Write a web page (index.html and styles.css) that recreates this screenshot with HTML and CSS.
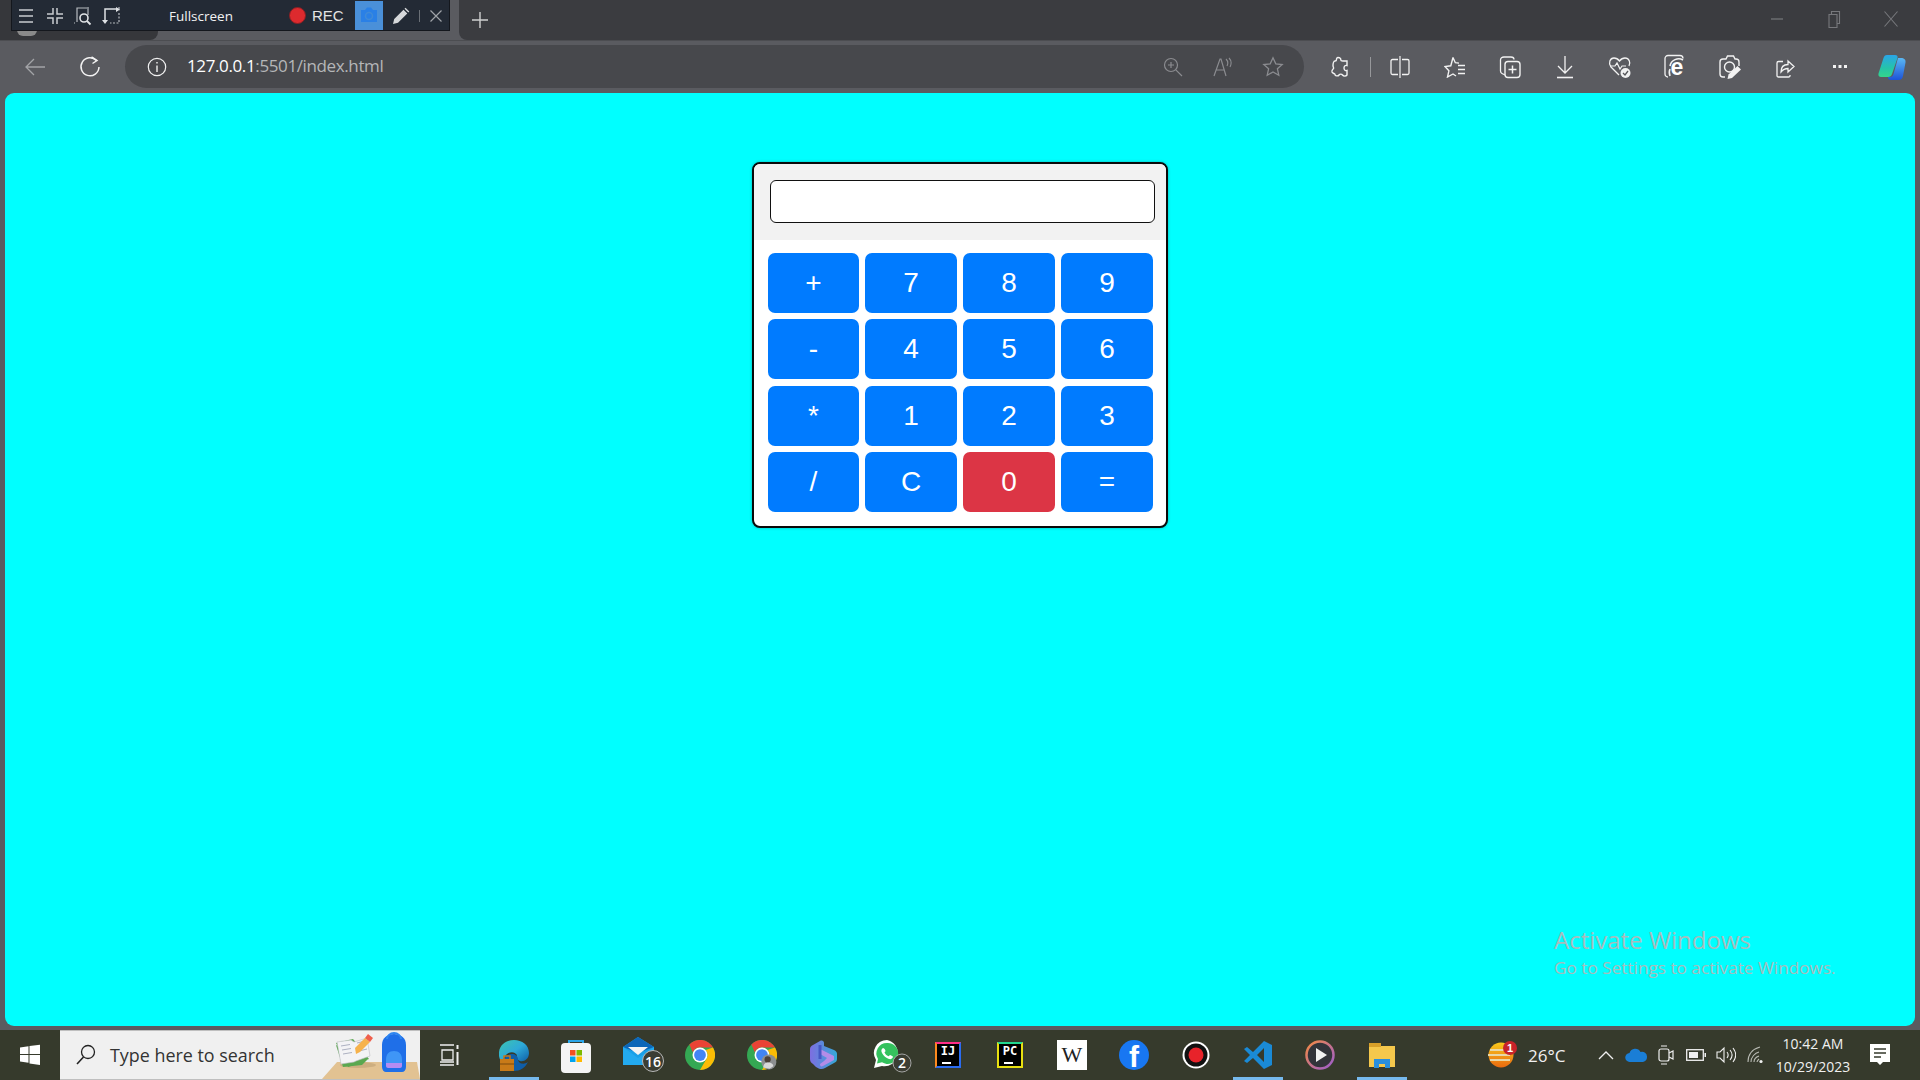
FILE: index.html
```html
<!DOCTYPE html>
<html lang="en">
<head>
<meta charset="utf-8">
<title>Calculator</title>
<link rel="stylesheet" href="styles.css">
</head>
<body>
<div class="win">
  <header class="tabstrip">
    <div class="tab-left"><span class="favicon"></span></div>
    <div class="tab-active"></div>
    <div class="tab-right">
      <svg class="newtab" width="18" height="18" viewBox="0 0 18 18"><path d="M9 1v16M1 9h16" stroke="#d0d0d0" stroke-width="1.4"/></svg>
      <div class="winctl">
        <span class="winbtn"><svg width="14" height="14" viewBox="0 0 14 14"><path d="M1 7h12" stroke="#77787c" stroke-width="1.2"/></svg></span>
        <span class="winbtn"><svg width="14" height="20" viewBox="0 0 14 20"><path d="M2 5.5h8v13H2zM4.500 5.500V2.500h8v12h-2.500" fill="none" stroke="#77787c" stroke-width="1.1"/></svg></span>
        <span class="winbtn"><svg width="16" height="18" viewBox="0 0 16 18"><path d="M1.500 1.500l13 15M14.500 1.500l-13 15" stroke="#77787c" stroke-width="1.100"/></svg></span>
      </div>
    </div>
    <div class="recbar">
      <span class="rec-ico"><svg width="18" height="18" viewBox="0 0 18 18"><path d="M2 3h14M2 9h14M2 15h14" stroke="#c9ccd0" stroke-width="1.500"/></svg></span>
      <span class="rec-ico"><svg width="18" height="18" viewBox="0 0 18 18"><path d="M7 1v6H1M11 1v6h6M7 17v-6H1M11 17v-6h6" fill="none" stroke="#c9ccd0" stroke-width="1.500"/></svg></span>
      <span class="rec-ico"><svg width="20" height="20" viewBox="0 0 20 20"><path d="M14 2H4v14M1 17h1M15 1v8" fill="none" stroke="#b7bbc0" stroke-width="1.200"/><circle cx="11" cy="12" r="4" fill="none" stroke="#dfe2e5" stroke-width="1.600"/><path d="M14 15l3.500 3.500" stroke="#dfe2e5" stroke-width="1.800"/></svg></span>
      <span class="rec-ico"><svg width="20" height="20" viewBox="0 0 20 20"><path d="M3 15V3h13" fill="none" stroke="#dfe2e5" stroke-width="1.500"/><path d="M17 1v3h1M17 7v10H8" fill="none" stroke="#b7bbc0" stroke-width="1.200" stroke-dasharray="2 1.500"/><path d="M0 14l3 4 3-4zM14 1l4 2.500-4 2.500z" fill="#dfe2e5"/></svg></span>
      <span class="rec-title">Fullscreen</span>
      <span class="rec-dot"></span>
      <span class="rec-label">REC</span>
      <span class="rec-cam"><svg width="20" height="18" viewBox="0 0 20 18"><path d="M2 4h4l2-2.500h4L14 4h4v12H2z" fill="#2a80e6"/><circle cx="10" cy="10" r="3.500" fill="none" stroke="#3f8ad8" stroke-width="1.500"/></svg></span>
      <span class="rec-pen"><svg width="18" height="18" viewBox="0 0 18 18"><path d="M1 17l1.200-5L11.500 2.700l3.800 3.800L6 15.800zM12.500 1.700l1-1 3.800 3.800-1 1z" fill="#d6d8da"/></svg></span>
      <span class="rec-sep"></span>
      <span class="rec-x"><svg width="14" height="14" viewBox="0 0 14 14"><path d="M1.500 1.500l11 11M12.500 1.500l-11 11" stroke="#9fa3a8" stroke-width="1.200"/></svg></span>
    </div>
  </header>

  <nav class="toolbar">
    <span class="tool"><svg width="22" height="22" viewBox="0 0 22 22"><path d="M21 11H2M10 3l-8 8 8 8" fill="none" stroke="#a3a4a7" stroke-width="1.300"/></svg></span>
    <span class="tool"><svg width="22" height="22" viewBox="0 0 22 22"><path d="M17.500 4.500A9 9 0 1 0 20 11" fill="none" stroke="#f2f2f2" stroke-width="1.500"/><path d="M12.500 1l5.500 3.500-4.500 3" fill="none" stroke="#f2f2f2" stroke-width="1.500"/></svg></span>
    <div class="omnibox">
      <svg class="info" width="20" height="20" viewBox="0 0 20 20"><circle cx="10" cy="10" r="8.700" fill="none" stroke="#f0f0f0" stroke-width="1.200"/><path d="M10 8.500V15M10 5v1.600" stroke="#f0f0f0" stroke-width="1.400"/></svg>
      <span class="url"><span class="url-host">127.0.0.1</span>:5501/index.html</span>
      <div class="omni-tools">
        <span class="omni-tool"><svg width="20" height="20" viewBox="0 0 20 20"><circle cx="8" cy="8" r="6.500" fill="none" stroke="#8b8c90" stroke-width="1.200"/><path d="M8 5v6M5 8h6M12.800 12.800L19 19" stroke="#8b8c90" stroke-width="1.200"/></svg></span>
        <span class="omni-tool"><svg width="20" height="20" viewBox="0 0 20 20"><path d="M1 19L7 2h1l5 17M3 13h8" fill="none" stroke="#8b8c90" stroke-width="1.200"/><path d="M13 2c2 2 2 5 1 7M16 1c2.500 2.500 2.500 6 1 9" fill="none" stroke="#8b8c90" stroke-width="1.100"/></svg></span>
        <span class="omni-tool"><svg width="22" height="22" viewBox="0 0 22 22"><path d="M11 1.800l2.800 6 6.400.7-4.800 4.300 1.400 6.400L11 16l-5.800 3.200 1.400-6.400L1.800 8.500l6.400-.7z" fill="none" stroke="#8b8c90" stroke-width="1.300"/></svg></span>
      </div>
    </div>
    <div class="tools-right">
      <span class="tool"><svg width="20" height="22" viewBox="0 0 20 22"><path d="M8 1.500c2 0 3 1 2.800 2.500 0 1 1 1 2 1H17v4.500c-1.500-.5-3 .5-3 2.500s1.500 3 3 2.500V19c-1 1.500-3.500 1.500-4.500 0-.8-1.200-2.700-1.200-3.500 0-1 1.500-4 1-4-.5 0-1-2.500-1-3-2.500-.5-2 1-3 1.500-3.500.5-.5-.5-1.500-.5-3S3.500 5 5 5c1 0 1.500-.5 1.500-1.500 0-1 .5-2 1.500-2z" fill="none" stroke="#f2f2f2" stroke-width="1.400"/></svg></span>
      <span class="vsep"></span>
      <span class="tool"><svg width="20" height="24" viewBox="0 0 20 24"><path d="M10 1v22" stroke="#f2f2f2" stroke-width="1.200"/><path d="M8 4.500H2.500a1.500 1.500 0 0 0-1.500 1.500v12a1.500 1.500 0 0 0 1.500 1.500H8M12 4.500h5.500A1.500 1.500 0 0 1 19 6v12a1.500 1.500 0 0 1-1.500 1.500H12" fill="none" stroke="#f2f2f2" stroke-width="1.300"/></svg></span>
      <span class="tool"><svg width="22" height="22" viewBox="0 0 22 22"><path d="M9 1.500l2.300 5.200 3.700.4M12 20l-3-2-5.500 3 1.400-6.200L1 10.500l5.800-.7L9 1.500" fill="none" stroke="#f2f2f2" stroke-width="1.400"/><path d="M14 9.500h7M14 13.500h7M14 17.500h7" stroke="#f2f2f2" stroke-width="1.400"/></svg></span>
      <span class="tool"><svg width="22" height="24" viewBox="0 0 22 24"><path d="M6 20L3 18.500C2 18 1.500 17 1.500 16V5C1.500 3 3 2 5 2h7c2 0 3 1 3 2.500" fill="none" stroke="#f2f2f2" stroke-width="1.300"/><rect x="6" y="6.500" width="15" height="16" rx="3" fill="none" stroke="#f2f2f2" stroke-width="1.400"/><path d="M13.500 10.500v8M9.500 14.500h8" stroke="#f2f2f2" stroke-width="1.500"/></svg></span>
      <span class="tool"><svg width="18" height="24" viewBox="0 0 18 24"><path d="M9 1v17M2 11l7 7 7-7" fill="none" stroke="#f2f2f2" stroke-width="1.300"/><path d="M1 22.500h16" stroke="#f2f2f2" stroke-width="1.600"/></svg></span>
      <span class="tool"><svg width="24" height="24" viewBox="0 0 24 24"><path d="M11 20L3 12C0 8 2 3 6 3c2 0 4 1 5.500 3C13 4 15 3 17 3c4 0 6 4.500 4 8" fill="none" stroke="#f2f2f2" stroke-width="1.300"/><path d="M2 11h5l2-3 3 6 2-3h4" fill="none" stroke="#f2f2f2" stroke-width="1.200"/><circle cx="17.500" cy="18" r="5" fill="#f2f2f2"/><path d="M15 18l2 2 3-4" fill="none" stroke="#55565a" stroke-width="1.300"/></svg></span>
      <span class="tool"><svg width="24" height="26" viewBox="0 0 24 26"><path d="M5 23a3 3 0 0 1-3-3V4.500a3 3 0 0 1 3-3h12a3 3 0 0 1 3 3" fill="none" stroke="#f2f2f2" stroke-width="1.300"/><path d="M20 6c-5-3-12 0-13 6M7 22c-1-3-1-5 0-7" fill="none" stroke="#f2f2f2" stroke-width="1.600"/><text x="7.500" y="21" class="ie-e">e</text></svg></span>
      <span class="tool"><svg width="24" height="26" viewBox="0 0 24 26"><path d="M7 23H5a3 3 0 0 1-3-3V8a3 3 0 0 1 3-3h3l1.500-3h6L17 5h1a3 3 0 0 1 3 3v4" fill="none" stroke="#f2f2f2" stroke-width="1.400"/><circle cx="11.500" cy="13" r="5" fill="none" stroke="#f2f2f2" stroke-width="1.400"/><path d="M9.500 25l1-4.500 9-8.500 3.500 3.500-9 8.500z" fill="#f2f2f2"/></svg></span>
      <span class="tool"><svg width="20" height="22" viewBox="0 0 20 22"><path d="M15 19v1a1.500 1.500 0 0 1-1.500 1h-10A1.500 1.500 0 0 1 2 20V7a1.500 1.500 0 0 1 1.500-1.500H8" fill="none" stroke="#f2f2f2" stroke-width="1.300"/><path d="M6 16c0-5 3-7.500 7-7.500V5l6 5.500-6 5.500v-3.500c-3 0-5 1-7 3.500z" fill="none" stroke="#f2f2f2" stroke-width="1.300"/></svg></span>
      <span class="tool"><svg width="16" height="4" viewBox="0 0 16 4"><path d="M1 0h3v3H1zM6.500 0h3v3h-3zM12 0h3v3h-3z" fill="#f2f2f2"/></svg></span>
      <span class="tool copilot"><svg width="30" height="30" viewBox="0 0 30 30"><defs><linearGradient id="cpa" x1="0" y1="0" x2="0" y2="1"><stop offset="0" stop-color="#2aa5e8"/><stop offset=".6" stop-color="#25c4a8"/><stop offset="1" stop-color="#34d58c"/></linearGradient><linearGradient id="cpb" x1="0" y1="0" x2="0" y2="1"><stop offset="0" stop-color="#5bb8f2"/><stop offset="1" stop-color="#1d53d8"/></linearGradient></defs><path d="M10 3h8c2 0 3 1 2.500 3L15 22c-.5 2-2 3-4 3H4c-2 0-3-1.500-2.500-3.500L6.500 6C7.200 4 8 3 10 3z" fill="url(#cpa)"/><path d="M21 6h3c3 0 5 1.500 4.500 4.500L26 24c-.5 2.500-2 4-4.500 4H14c-2 0-3-1-3-3h2c2 0 3-1 3.500-3z" fill="url(#cpb)"/></svg></span>
    </div>
  </nav>

  <div class="viewport">
    <main class="page">
      <section class="calc">
        <div class="display"><input class="screen" type="text" aria-label="Result"></div>
        <div class="keys">
          <button class="key">+</button><button class="key">7</button><button class="key">8</button><button class="key">9</button>
          <button class="key">-</button><button class="key">4</button><button class="key">5</button><button class="key">6</button>
          <button class="key">*</button><button class="key">1</button><button class="key">2</button><button class="key">3</button>
          <button class="key">/</button><button class="key">C</button><button class="key key-red">0</button><button class="key">=</button>
        </div>
      </section>
      <div class="activate">
        <div class="activate-title">Activate Windows</div>
        <div class="activate-sub">Go to Settings to activate Windows.</div>
      </div>
    </main>
  </div>

  <footer class="taskbar">
    <span class="startbtn"><svg width="22" height="22" viewBox="0 0 22 22"><path d="M1 3.500l8.500-1.200V10H1zM10.500 2.100L21 .7V10H10.500zM1 11h8.500v7.800L1 17.500zM10.500 11H21v10l-10.500-1.500z" fill="#fff"/></svg></span>
    <div class="searchbox">
      <svg class="search-ico" width="22" height="24" viewBox="0 0 22 24"><circle cx="13" cy="9" r="6.500" fill="none" stroke="#222" stroke-width="1.300"/><path d="M8.500 14L2 21" stroke="#222" stroke-width="1.600"/></svg>
      <span class="search-text">Type here to search</span>
      <svg class="search-art" width="98" height="48" viewBox="0 0 98 48"><path d="M0 48l15-17h80l3 17z" fill="#e2c292"/><ellipse cx="36" cy="34" rx="18" ry="3" fill="#cdae80"/><path d="M14 14l31 15-5 5-19 2z" fill="#5aa850"/><path d="M14 12l17-4 16 20-18 7-3 1z" fill="#5aa850"/><path d="M15 11l14-2 3 2 13-4 3 18-14 5-2 1-13 2z" fill="#f3f3f5" stroke="#bdbdc4" stroke-width=".6"/><path d="M19 15l9-1.500M20 19l9-1.500M21 23l9-1.500M35 12l8-2M36 16l8-2M37 20l8-2" stroke="#9aa0b4" stroke-width=".8"/><path d="M34 23l-1-6 10-10 5 4-10 10z" fill="#f6b24c"/><path d="M43 7l3-4 5 4-3 4z" fill="#ef5f4c"/><path d="M60 14c0-7 5-11 12-11s12 4 12 11v22c0 3-2 5-4 5H64c-2 0-4-2-4-5z" fill="#1f6fe8"/><path d="M65 8c0-3 3-6 7-6s7 3 7 6" fill="none" stroke="#2f86f0" stroke-width="2"/><path d="M64 29c0-6 3-9 8-9s8 3 8 9v4H64z" fill="#3f96f6"/><path d="M64 32h16v3c0 1-1 2-2 2H66c-1 0-2-1-2-2z" fill="#b48cf2"/></svg>
    </div>
    <span class="tb-view"><svg width="20" height="24" viewBox="0 0 20 24"><path d="M1 2h14M1 22h14M1 19h14M3 7h11v10H3z" fill="none" stroke="#f0f0f0" stroke-width="1.300"/><path d="M18.500 2v4M18.500 9v13" stroke="#f0f0f0" stroke-width="2"/></svg></span>
    <span class="tb-app tb-on"><svg width="30" height="36" viewBox="0 0 30 36"><defs><linearGradient id="eg" x1="0" y1="0" x2="1" y2="1"><stop offset="0" stop-color="#3cc6b0"/><stop offset=".5" stop-color="#2ea9d8"/><stop offset="1" stop-color="#0c59a4"/></linearGradient></defs><path d="M15 3c8 0 15 5 15 13 0 6-5 9-9 8-3-1-4-4-3-6-2-3-6-4-10-1-3 2-4 5-4 9C-2 22-1 11 4 7c3-3 7-4 11-4z" fill="url(#eg)"/><path d="M4 26c1-6 5-9 9-9 3 0 6 2 6 5 0 5 6 6 10 3-3 6-8 9-14 9-5 0-9-3-11-8z" fill="#0f5ea8"/><path d="M1 22h14v12H1z" fill="#c87a18"/><path d="M5 22v-3h6v3" fill="none" stroke="#c87a18" stroke-width="1.500"/><path d="M1 27h14" stroke="#7b4a0e" stroke-width="1"/></svg></span>
    <span class="tb-app"><svg width="30" height="36" viewBox="0 0 30 36"><path d="M8 8V4h14v4" fill="none" stroke="#2aa5e8" stroke-width="2"/><rect y="6" width="30" height="30" rx="4" fill="#f4f4f4"/><path d="M9 13h5.500v5.500H9z" fill="#f25022"/><path d="M15.500 13H21v5.500h-5.500z" fill="#7fba00"/><path d="M9 19.500h5.500V25H9z" fill="#00a4ef"/><path d="M15.500 19.500H21V25h-5.500z" fill="#ffb900"/></svg></span>
    <span class="tb-app"><svg class="tb-mail" width="46" height="38" viewBox="0 0 46 38"><path d="M1 11L16 1l16 10v18H1z" fill="#1aa0e8"/><path d="M1 11L16 1l16 10-16 6z" fill="#0d66b8"/><path d="M6 11h20l-10 8z" fill="#f4f4f4"/><path d="M1 11l15 11 16-11v18H1z" fill="#23aaf0"/><circle cx="31" cy="25" r="10.500" fill="#3b3d33" stroke="#b8b8b8" stroke-width="1"/><text x="31" y="30.500" class="badge-n">16</text></svg></span>
    <span class="tb-app"><svg width="30" height="30" viewBox="0 0 24 24"><circle cx="12" cy="12" r="12" fill="#34a853"/><path d="M3.500 3.500A12 12 0 0 1 22.400 6H12a6 6 0 0 0-5.700 4z" fill="#ea4335"/><path d="M22.400 6A12 12 0 0 1 12 24l5.200-9A6 6 0 0 0 16.500 8z" fill="#fbbc05"/><circle cx="12" cy="12" r="6" fill="#fff"/><circle cx="12" cy="12" r="4.700" fill="#4285f4"/></svg></span>
    <span class="tb-app"><svg width="30" height="30" viewBox="0 0 24 24"><circle cx="12" cy="12" r="12" fill="#34a853"/><path d="M3.500 3.500A12 12 0 0 1 22.400 6H12a6 6 0 0 0-5.700 4z" fill="#ea4335"/><path d="M22.400 6A12 12 0 0 1 12 24l5.200-9A6 6 0 0 0 16.500 8z" fill="#fbbc05"/><circle cx="12" cy="12" r="6" fill="#fff"/><circle cx="12" cy="12" r="4.700" fill="#4285f4"/><circle cx="17.500" cy="17.500" r="6" fill="#8c8f90"/><circle cx="16.500" cy="15.500" r="2.500" fill="#4c4038"/><path d="M13 22c0-3 2-4 4-4s4 1 4 3l-3 2z" fill="#d8d8d8"/></svg></span>
    <span class="tb-app"><svg width="28" height="30" viewBox="0 0 28 30"><defs><linearGradient id="cb" x1="0" y1="0" x2="1" y2="0"><stop offset="0" stop-color="#7d6ee0"/><stop offset="1" stop-color="#35a9d8"/></linearGradient></defs><path d="M3 5l7-4c2-1 4 0 4 2v3l10 4c2 1 3 2 3 4v5c0 2-1 3-3 4l-9 5c-3 2-6 1-9-1l-3-3c-2-1-3-3-3-5V9c0-2 1-3 3-4z" fill="url(#cb)"/><path d="M10 9l14 7v4L13 26c-2 1-3 0-3-2l4-3 3-3-7-4z" fill="#b38ce8"/><path d="M10 5v14" stroke="#4657c4" stroke-width="3"/></svg></span>
    <span class="tb-app"><svg width="44" height="36" viewBox="0 0 44 36" class="tb-wa"><path d="M14 3a13 13 0 0 0-11 20L1 31l8-2A13 13 0 1 0 14 3z" fill="#fff"/><path d="M14 6a10.500 10.500 0 0 0-9 16l-1 4.500 5-1.200A10.500 10.500 0 1 0 14 6z" fill="#35c25e"/><path d="M10 11c-2 1-2 3-1 5 1.500 3 4 5 7 6 2 .5 3.500-.5 4-2 0-1-2.500-2-3-2s-1 1.500-1.500 1.300c-2-.8-3.300-2.300-4-3.800 0-.5 1-1 1-1.500s-1-3-2.500-3z" fill="#fff"/><circle cx="29" cy="26" r="9" fill="#3b3d33" stroke="#b0b0b0" stroke-width=".9"/><text x="29" y="31" class="badge-n">2</text></svg></span>
    <span class="tb-app"><span class="jb jb-ij"><span class="jb-in">IJ</span></span></span>
    <span class="tb-app"><span class="jb jb-pc"><span class="jb-in">PC</span></span></span>
    <span class="tb-app"><span class="wiki">W</span></span>
    <span class="tb-app"><span class="fb">f</span></span>
    <span class="tb-app"><svg width="28" height="28" viewBox="0 0 28 28"><circle cx="14" cy="14" r="13.500" fill="#fff"/><circle cx="14" cy="14" r="11.500" fill="#111"/><circle cx="14" cy="14" r="7.500" fill="#e8232a"/></svg></span>
    <span class="tb-app tb-on"><svg width="30" height="30" viewBox="0 0 30 30"><path d="M21 1l8 4v20l-8 4-11-11-6 5-3-2 6-6-6-6 3-2 6 5zM21 8l-7 7 7 7z" fill="#1a8ad6" fill-rule="evenodd"/></svg></span>
    <span class="tb-app"><svg width="30" height="30" viewBox="0 0 30 30"><defs><linearGradient id="pl" x1="0" y1="0" x2="1" y2="1"><stop offset="0" stop-color="#f58a42"/><stop offset="1" stop-color="#9a5cd0"/></linearGradient></defs><circle cx="15" cy="15" r="13.500" fill="#33343a" stroke="url(#pl)" stroke-width="2.500"/><path d="M11 8l11 7-11 7z" fill="#f2f2f2"/></svg></span>
    <span class="tb-app tb-on"><svg width="28" height="28" viewBox="0 0 28 28"><path d="M1 2h10l2 3h14v21H1z" fill="#f5c84c"/><path d="M1 2h12v4H1z" fill="#d8a02a"/><path d="M6 27v-9h16v9h-5v-4h-6v4z" fill="#2a8fdc"/></svg></span>
    <div class="tray">
      <span class="weather"><svg width="32" height="30" viewBox="0 0 32 30"><defs><linearGradient id="wt" x1="0" y1="0" x2="0" y2="1"><stop offset="0" stop-color="#f8c81c"/><stop offset="1" stop-color="#ea6a10"/></linearGradient></defs><circle cx="13" cy="15" r="12.500" fill="url(#wt)"/><path d="M2 10h18M0 15h22M2 20h20" stroke="#e8d8a8" stroke-width="2"/><circle cx="22" cy="8" r="7" fill="#c8232a"/><text x="22" y="12" class="badge-w">1</text></svg></span>
      <span class="temp">26°C</span>
      <span class="tray-ico tray-caret"><svg width="16" height="10" viewBox="0 0 16 10"><path d="M1 9l7-7 7 7" fill="none" stroke="#f0f0f0" stroke-width="1.300"/></svg></span>
      <span class="tray-ico"><svg width="22" height="14" viewBox="0 0 22 14"><path d="M5 14a4.500 4.500 0 0 1-.5-9 6 6 0 0 1 11-1A5 5 0 0 1 22 9a5 5 0 0 1-4 5z" fill="#1a7ed6"/></svg></span>
      <span class="tray-ico"><svg width="16" height="20" viewBox="0 0 16 20"><rect x="1" y="4" width="10" height="12" rx="2" fill="none" stroke="#f0f0f0" stroke-width="1.200"/><path d="M11 8l4-2v8l-4-2M3 1h6M3 19h6" fill="none" stroke="#f0f0f0" stroke-width="1.200"/></svg></span>
      <span class="tray-ico"><svg width="20" height="12" viewBox="0 0 20 12"><rect x=".7" y=".7" width="16.600" height="10.600" fill="none" stroke="#f0f0f0" stroke-width="1.300"/><path d="M3 3h9v6H3z" fill="#f0f0f0"/><path d="M18.500 4h1.500v4h-1.500z" fill="#f0f0f0"/></svg></span>
      <span class="tray-ico"><svg width="20" height="18" viewBox="0 0 20 18"><path d="M1 6h3l4-4v14l-4-4H1z" fill="none" stroke="#f0f0f0" stroke-width="1.100"/><path d="M11 6c1.500 2 1.500 4 0 6M14 4c2.500 3 2.500 7 0 10M17 2c3.500 4.500 3.500 9.500 0 14" fill="none" stroke="#f0f0f0" stroke-width="1.100"/></svg></span>
      <span class="tray-ico"><svg width="18" height="18" viewBox="0 0 18 18"><path d="M1 16C1 8 6 3 13 1M4 16c0-5 4-9 8-10M7 16c0-3 2-5 5-6M10 16c0-1 1-2 2-3" fill="none" stroke="#b9bbb4" stroke-width="1.100"/><circle cx="14" cy="15.500" r="1.600" fill="#f0f0f0"/></svg></span>
      <span class="clock"><span>10:42 AM</span><span>10/29/2023</span></span>
      <span class="notif"><svg width="20" height="22" viewBox="0 0 20 22"><path d="M0 0h20v18h-7l-3 3-3-3H0z" fill="#fff"/><path d="M4 5h12M4 9h12M4 13h7" stroke="#363a2c" stroke-width="1.300"/></svg></span>
    </div>
  </footer>
</div>
</body>
</html>
```

FILE: styles.css
```css
* { box-sizing: border-box; }
html, body { margin: 0; height: 100%; }
body { font-family: "Open Sans", "Liberation Sans", sans-serif; overflow: hidden; background: #5a5b60; }
.win { width: 1920px; height: 1080px; display: flex; flex-direction: column; }

.tabstrip { position: relative; height: 40px; flex: none; display: flex; background: #5a5b60; }
.tab-left { width: 158px; background: #36373b; border-bottom-right-radius: 8px; position: relative; overflow: hidden; }
.favicon { position: absolute; left: 17px; top: 30px; width: 20px; height: 6px; border-radius: 0 0 10px 10px; background: #8a8a8a; }
.tab-active { width: 301px; }
.tab-right { flex: 1; background: #3b3c40; border-bottom-left-radius: 8px; display: flex; align-items: center; }
.newtab { margin-left: 12px; }
.winctl { margin-left: auto; display: flex; align-items: center; padding-right: 1px; margin-top: -2px; }
.winbtn { width: 57px; display: flex; justify-content: center; align-items: center; }

.recbar { position: absolute; left: 11px; top: 0; width: 439px; height: 31px; padding-top: 1px; background: #232a35; border: 1px solid #14171d; border-top: 0; display: flex; align-items: center; color: #f2f2f2; }
.rec-ico { width: 28.500px; display: flex; justify-content: center; flex: none; }
.rec-title { font-size: 13.500px; margin-left: 43px; width: 64px; white-space: nowrap; }
.rec-dot { width: 17px; height: 17px; border-radius: 50%; background: #dd2a2e; border: 1px solid #8a2024; margin-left: 56px; flex: none; }
.rec-label { font-family: "Liberation Sans", Arial, sans-serif; font-size: 15px; width: 32px; margin-left: 6px; color: #e4e4e4; white-space: nowrap; }
.rec-cam { width: 28px; height: 29px; background: #4a90d9; margin-left: 11px; margin-top: -1px; display: flex; align-items: center; justify-content: center; flex: none; }
.rec-pen { width: 36px; display: flex; justify-content: center; flex: none; }
.rec-sep { width: 1px; height: 12px; background: #6a6f76; flex: none; }
.rec-x { width: 30px; display: flex; justify-content: center; flex: none; margin-left: 1px; }

.toolbar { height: 53px; flex: none; display: flex; align-items: center; background: #5a5b60; padding-left: 7px; box-shadow: inset 0 1px 0 #4c4d51; }
.tool { width: 55px; display: flex; justify-content: center; align-items: center; flex: none; }
.tools-right .copilot { width: 49px; }
.omnibox { flex: 1; height: 43px; margin-left: 8px; border-radius: 22px; background: #47484c; display: flex; align-items: center; padding: 0 6px 0 22px; min-width: 0; }
.info { flex: none; }
.url { margin-left: 20px; padding-bottom: 2px; font-size: 17px; letter-spacing: -0.38px; color: #b5b6b8; white-space: nowrap; }
.url-host { color: #fff; }
.omni-tools { margin-left: auto; display: flex; }
.omni-tool { width: 50px; display: flex; justify-content: center; align-items: center; }
.tools-right { width: 616px; flex: none; display: flex; align-items: center; padding-left: 5px; }
.tools-right .tool:first-child { width: 61px; }
.vsep { width: 1px; height: 20px; background: #97989b; flex: none; margin-right: 1px; }
.ie-e { font-family: "Liberation Sans", sans-serif; font-weight: 700; font-size: 23px; fill: #fff; }

.viewport { flex: 1; min-height: 0; background: #5a5b60; padding: 0 5px 4px; }
.page { position: relative; height: 100%; background: #00ffff; border-radius: 9px; display: flex; flex-direction: column; align-items: center; padding-top: 69px; }

.calc { width: 416px; border: 2px solid #0a0a0a; border-radius: 8px; background: #fff; overflow: hidden; box-shadow: 0 0 3px rgba(0,0,0,.3); }
.display { height: 76px; background: #f2f2f2; padding: 16px 0 0 16px; }
.screen { display: block; width: 385px; height: 43px; border: 1px solid #111; border-radius: 6px; background: #fff; outline: 0; }
.keys { display: grid; grid-template-columns: 91px 92px 92px 92px; grid-auto-rows: 60px; column-gap: 6px; row-gap: 6.330px; padding: 13px 13px 14px 14px; }
.key { border: 0; border-radius: 7px; padding: 0; background: #007bff; color: #fff; font-family: "Liberation Sans", Arial, sans-serif; font-size: 28px; }
.key-red { background: #dc3545; }

.activate { position: absolute; left: 1549px; top: 831px; color: #a7bcbc; white-space: nowrap; }
.activate-title { font-size: 24px; line-height: 32px; }
.activate-sub { font-size: 17.200px; line-height: 24px; }

.taskbar { height: 50px; flex: none; display: flex; align-items: center; background: #363a2c; color: #f0f0f0; }
.startbtn { width: 60px; display: flex; justify-content: center; align-items: center; flex: none; }
.searchbox { width: 360px; height: 50px; flex: none; background: #f0f0f0; border-top: 1px solid #bfbfbf; border-bottom: 1px solid #bfbfbf; display: flex; align-items: center; padding-left: 15px; position: relative; }
.search-text { margin-left: 13px; font-size: 17.900px; color: #333; white-space: nowrap; }
.search-art { margin-left: auto; align-self: flex-end; }
.tb-view { width: 58px; margin-right: 5px; display: flex; justify-content: center; flex: none; }
.tb-app { width: 62px; height: 50px; display: flex; justify-content: center; align-items: center; flex: none; position: relative; }
.tb-on::after { content: ""; position: absolute; left: 6px; right: 6px; bottom: 0; height: 3px; background: #76b9ed; }
.badge-n { font-family: "Open Sans", sans-serif; font-size: 14px; font-weight: 600; fill: #fff; text-anchor: middle; }
.badge-w { font-family: "Liberation Sans", sans-serif; font-size: 11px; font-weight: 700; fill: #fff; text-anchor: middle; }
.tb-mail { overflow: visible; transform: translateX(7px); }
.tb-wa { transform: translateX(9px); }
.jb { width: 26px; height: 26px; display: flex; align-items: flex-start; justify-content: center; background: #000; border: 2px solid; }
.jb-ij { border-color: #ff2d88 #2b6cf0 #2b6cf0 #ff8a1e; }
.jb-pc { border-color: #22d68f #e8e010 #e8e010 #e8e010; }
.jb-in { position: relative; font-family: "DejaVu Sans Mono", "Liberation Mono", monospace; font-weight: 700; font-size: 12px; line-height: 15px; color: #fff; padding-bottom: 7px; }
.jb-in::after { content: ""; position: absolute; left: 1px; bottom: 2px; width: 9px; height: 2px; background: #fff; }
.wiki { width: 30px; height: 30px; background: #fff; color: #222; font-family: "Liberation Serif", serif; font-size: 22px; display: flex; align-items: center; justify-content: center; }
.fb { width: 30px; height: 30px; padding-top: 3px; border-radius: 50%; background: #1877f2; color: #fff; font-family: "Liberation Sans", sans-serif; font-weight: 700; font-size: 30px; display: flex; justify-content: center; align-items: flex-start; line-height: 27px; }

.tray { flex: 1; display: flex; align-items: center; padding-left: 75px; min-width: 0; }
.weather { width: 32px; flex: none; display: flex; }
.temp { font-size: 17px; margin-left: 8px; width: 40px; white-space: nowrap; }
.tray-ico { width: 30px; display: flex; justify-content: center; align-items: center; flex: none; }
.tray-caret { margin-left: 23px; }
.clock { width: 78px; margin-left: 3px; display: flex; flex-direction: column; align-items: center; font-size: 14px; line-height: 23px; white-space: nowrap; flex: none; }
.notif { margin-left: 18px; display: flex; flex: none; }
```
